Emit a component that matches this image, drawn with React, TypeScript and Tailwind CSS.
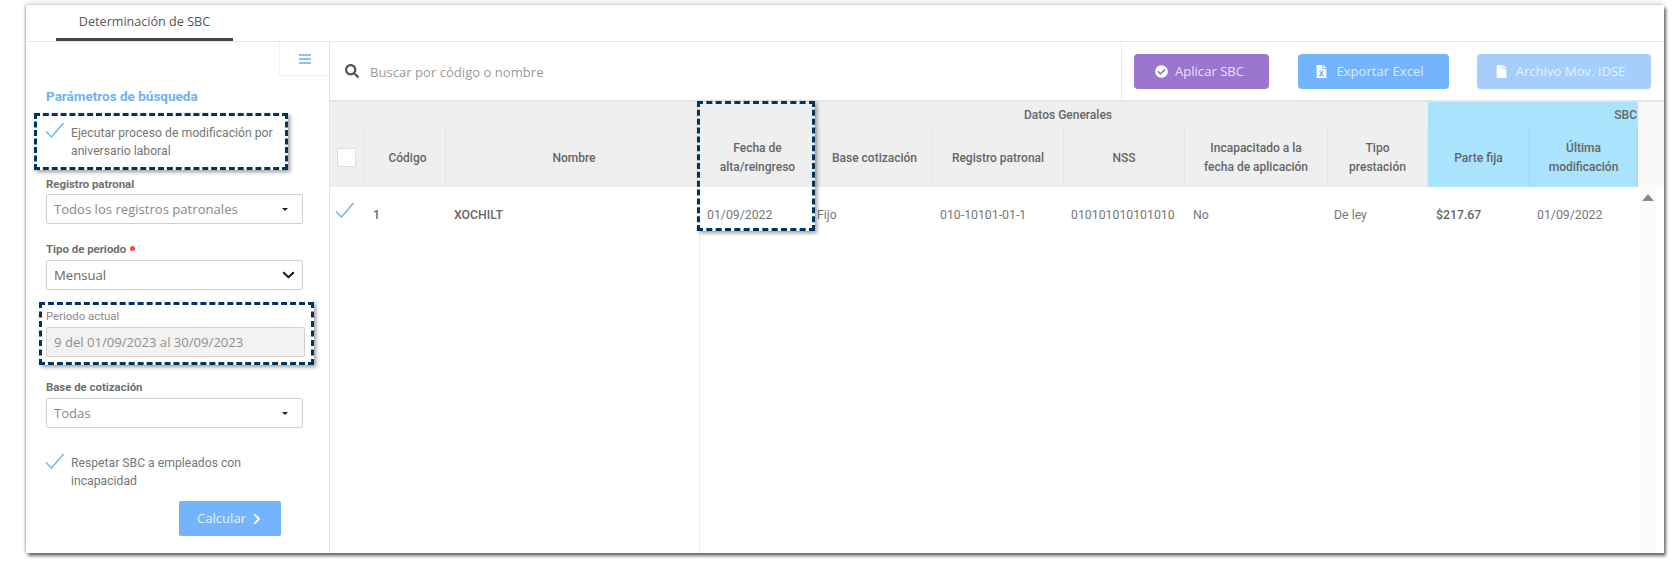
import { FaCheckCircle, FaChevronRight, FaFile, FaFileExcel, FaSearch } from "react-icons/fa";

const OPEN = "font-['Open_Sans',sans-serif]";
const ROBOTO = "font-['Roboto',sans-serif]";

function Tick({ className = "" }: { className?: string }) {
  return (
    <svg viewBox="0 0 20 16" className={`h-[16px] w-[20px] shrink-0 ${className}`} fill="none" stroke="#6fb2f5" strokeWidth="1.4">
      <path d="M1 9.5 L6.5 15 L18.5 1" />
    </svg>
  );
}

function Caret() {
  return <span className="h-0 w-0 border-x-[3px] border-t-[3px] border-x-transparent border-t-[#222]" />;
}

function Field({ text, children, tone = "bg-white text-[#888]" }: { text: string; children?: React.ReactNode; tone?: string }) {
  return (
    <div className={`flex h-[30px] items-center justify-between rounded-[2px] border border-[#d0d0d0] pl-[7px] pr-[14px] text-[13.1px] ${OPEN} ${tone}`}>
      <span className="pt-[1px]">{text}</span>
      {children}
    </div>
  );
}

function Label({ children }: { children: React.ReactNode }) {
  return <div className={`text-[11.4px] font-bold leading-[16px] text-[#6f6f6f] ${ROBOTO}`}>{children}</div>;
}

function Sidebar() {
  return (
    <aside className={`flex w-[304px] shrink-0 flex-col border-r border-[#e3e3e3] ${ROBOTO}`}>
      <div className="flex justify-end">
        <div className="flex h-[34px] w-[50px] items-center justify-center border-b border-l border-[#f3f3f3]">
          <div className="flex w-[12px] flex-col gap-[2px]">
            <span className="h-[2px] bg-[#8cc2f7]" />
            <span className="h-[2px] bg-[#8cc2f7]" />
            <span className="h-[2px] bg-[#8cc2f7]" />
          </div>
        </div>
      </div>
      <div className="mt-[12px] pl-[20px] text-[13.5px] font-bold leading-[16px] text-[#6db3f5]">Parámetros de búsqueda</div>
      <div className="ml-[8px] mt-[9px] flex h-[57px] w-[254px] items-start gap-[6px] border-[3px] border-dashed border-[#003366] pl-[8px] pt-[5px] shadow-[2px_2px_4px_rgba(0,0,0,0.4)]">
        <Tick className="mt-[1px]" />
        <div className="whitespace-nowrap pt-[3px] text-[12.2px] leading-[18px] text-[#777]">
          Ejecutar proceso de modificación por
          <br />
          aniversario laboral
        </div>
      </div>
      <div className="mt-[6px] w-[277px] pl-[20px]">
        <Label>Registro patronal</Label>
        <div className="mt-[2px]">
          <Field text="Todos los registros patronales">
            <Caret />
          </Field>
        </div>
        <div className="mt-[17px] flex items-center gap-[4px]">
          <Label>Tipo de periodo</Label>
          <span className="mb-[2px] h-[5px] w-[5px] rounded-full bg-[#f44]" />
        </div>
        <div className="mt-[3px]">
          <Field text="Mensual" tone="bg-white text-[#666]">
            <svg viewBox="0 0 14 9" className="-mr-[7px] h-[8px] w-[13px]" fill="none" stroke="#111" strokeWidth="2.2">
              <path d="M1 1.5 L7 7 L13 1.5" />
            </svg>
          </Field>
        </div>
      </div>
      <div className="ml-[13px] mt-[12px] h-[63px] w-[275px] border-[3px] border-dashed border-[#003366] pl-[4px] pr-[6px] pt-[3px] shadow-[2px_2px_4px_rgba(0,0,0,0.4)]">
        <div className={`text-[11.4px] leading-[16px] text-[#8a8a8a] ${ROBOTO}`}>Periodo actual</div>
        <div className="mt-[3px]">
          <Field text="9 del 01/09/2023 al 30/09/2023" tone="bg-[#f2f2f2] text-[#8f8f8f]" />
        </div>
      </div>
      <div className="mt-[14px] w-[277px] pl-[20px]">
        <Label>Base de cotización</Label>
        <div className="mt-[3px]">
          <Field text="Todas">
            <Caret />
          </Field>
        </div>
      </div>
      <div className="ml-[19px] mt-[26px] flex items-start gap-[6px]">
        <Tick className="mt-[-1px]" />
        <div className="text-[12.2px] leading-[18px] text-[#777]">
          Respetar SBC a empleados con
          <br />
          incapacidad
        </div>
      </div>
      <div className="ml-[153px] mt-[11px]">
        <button className={`flex h-[35px] w-[102px] items-center justify-center gap-[5px] rounded-[2px] bg-[#74b4fc] text-[13.1px] text-[#e4f0fe] ${OPEN}`}>
          Calcular <FaChevronRight className="text-[12px] text-white" />
        </button>
      </div>
    </aside>
  );
}

function Toolbar() {
  return (
    <div className="flex h-[60px] items-center border-b-2 border-[#e4e4e4]">
      <FaSearch className="ml-[15px] text-[14px] text-[#555]" />
      <span className={`ml-[11px] flex-1 pt-[3px] text-[13.1px] text-[#9a9a9a] ${OPEN}`}>Buscar por código o nombre</span>
      <div className="flex h-full items-center border-l border-[#ececec] pl-[12px] pr-[13px]">
        <button className={`flex h-[35px] w-[135px] items-center justify-center gap-[7px] rounded-[4px] bg-[#9a76ce] pr-[4px] text-[13.1px] text-[#e8e0f5] ${OPEN}`}>
          <FaCheckCircle className="text-[13px] text-white" /> <span className="pt-[1px]">Aplicar SBC</span>
        </button>
        <button className={`ml-[29px] flex h-[35px] w-[151px] items-center justify-center gap-[8px] rounded-[4px] bg-[#74b4fc] pr-[8px] text-[13.1px] text-[#dcecfe] ${OPEN}`}>
          <FaFileExcel className="text-[13px] text-white" /> <span className="pt-[1px]">Exportar Excel</span>
        </button>
        <button className={`ml-[28px] flex h-[35px] w-[174px] items-center justify-center gap-[8px] rounded-[4px] bg-[#a5cefd] pr-[8px] text-[13.1px] text-[#e6f1fe] ${OPEN}`}>
          <FaFile className="text-[13px] text-white" /> <span className="pt-[1px]">Archivo Mov. IDSE</span>
        </button>
      </div>
    </div>
  );
}

const COLS = "grid grid-cols-[35px_81px_253px_118px_116px_131px_121px_143px_100px_102px_108px_26px]";

const HEADERS = [
  { lines: ["Código"], nudge: "pl-[5px]" },
  { lines: ["Nombre"], nudge: "pl-[4px]" },
  { lines: ["Fecha de", "alta/reingreso"], nudge: "" },
  { lines: ["Base cotización"], nudge: "" },
  { lines: ["Registro patronal"], nudge: "" },
  { lines: ["NSS"], nudge: "" },
  { lines: ["Incapacitado a la", "fecha de aplicación"], nudge: "" },
  { lines: ["Tipo", "prestación"], nudge: "" },
];

function HeadCell({ lines, nudge = "", blue = false }: { lines: string[]; nudge?: string; blue?: boolean }) {
  return (
    <div
      className={`flex h-[60px] flex-col items-center justify-center border-r pt-[2px] text-center text-[12px] font-medium leading-[19px] text-[#666] ${nudge} ${
        blue ? "border-[#9cd8f4] bg-[#a9e3fe]" : "border-[#e6e6e6] bg-[#efefef]"
      }`}
    >
      {lines.map((l) => (
        <span key={l}>{l}</span>
      ))}
    </div>
  );
}

function Table() {
  return (
    <div className={`relative flex-1 ${ROBOTO}`}>
      <div className={`${COLS} text-[12px] font-medium text-[#666]`}>
        <div className="col-span-9 flex h-[25px] items-center justify-center bg-[#efefef] pl-[378px] pt-[1px]">Datos Generales</div>
        <div className="col-span-2 flex h-[25px] items-center justify-end bg-[#a9e3fe] pr-[1px] pt-[1px]">SBC</div>
        <div className="bg-[#f9f9f9]" />
        <div className="flex h-[60px] items-center border-r border-[#e6e6e6] bg-[#efefef] pl-[7px]">
          <span className="h-[19px] w-[19px] border border-[#ddd] bg-white" />
        </div>
        {HEADERS.map((h) => (
          <HeadCell key={h.lines[0]} lines={h.lines} nudge={h.nudge} />
        ))}
        <HeadCell lines={["Parte fija"]} blue />
        <HeadCell lines={["Última", "modificación"]} blue />
        <div className="bg-[#f9f9f9]" />
      </div>
      <div className={`${COLS} h-[366px] text-[12.3px] text-[#777]`}>
        <div className="pl-[5px] pt-[15px]">
          <Tick />
        </div>
        <div className="pl-[8px] pt-[19px] font-medium text-[#666]">1</div>
        <div className="pl-[8px] pt-[19px] font-medium text-[#666]">XOCHILT</div>
        <div className="border-l border-[#eee] pl-[7px] pt-[19px]">01/09/2022</div>
        <div className="pt-[19px]">Fijo</div>
        <div className="pl-[7px] pt-[19px]">010-10101-01-1</div>
        <div className="pl-[7px] pt-[19px]">010101010101010</div>
        <div className="pl-[8px] pt-[19px]">No</div>
        <div className="pl-[6px] pt-[19px]">De ley</div>
        <div className="pl-[8px] pt-[19px] font-medium text-[#666]">$217.67</div>
        <div className="pl-[7px] pt-[19px]">01/09/2022</div>
        <div className="flex justify-start pl-[1px]">
          <div className="flex h-full w-[17px] justify-center bg-[#fbfbfb] pt-[7px]">
            <span className="h-0 w-0 border-x-[6px] border-b-[7px] border-x-transparent border-b-[#8a8a8a]" />
          </div>
        </div>
      </div>
      {/* highlight drawn over the Fecha column */}
      <div className="absolute left-[367px] top-[-1px] h-[130px] w-[118px] border-[3px] border-dashed border-[#003366] shadow-[2px_2px_4px_rgba(0,0,0,0.4)]" />
    </div>
  );
}

export default function App() {
  return (
    <div className="h-[562px] w-[1673px] overflow-hidden bg-white pl-[26px] pt-[5px]">
      <div className="flex h-[548px] w-[1638px] flex-col bg-white shadow-[2px_3px_3px_rgba(0,0,0,0.55),0_-3px_5px_rgba(0,0,0,0.1),-1px_0_2px_rgba(0,0,0,0.25)]">
        <div className={`h-[37px] border-b border-[#e6e6e6] pl-[30px] ${OPEN}`}>
          <div className="flex h-[36px] w-[177px] items-center justify-center border-b-[3px] border-[#444] pt-[2px] text-[12.6px] text-[#555]">
            Determinación de SBC
          </div>
        </div>
        <div className="flex flex-1">
          <Sidebar />
          <div className="flex flex-1 flex-col">
            <Toolbar />
            <Table />
          </div>
        </div>
      </div>
    </div>
  );
}
